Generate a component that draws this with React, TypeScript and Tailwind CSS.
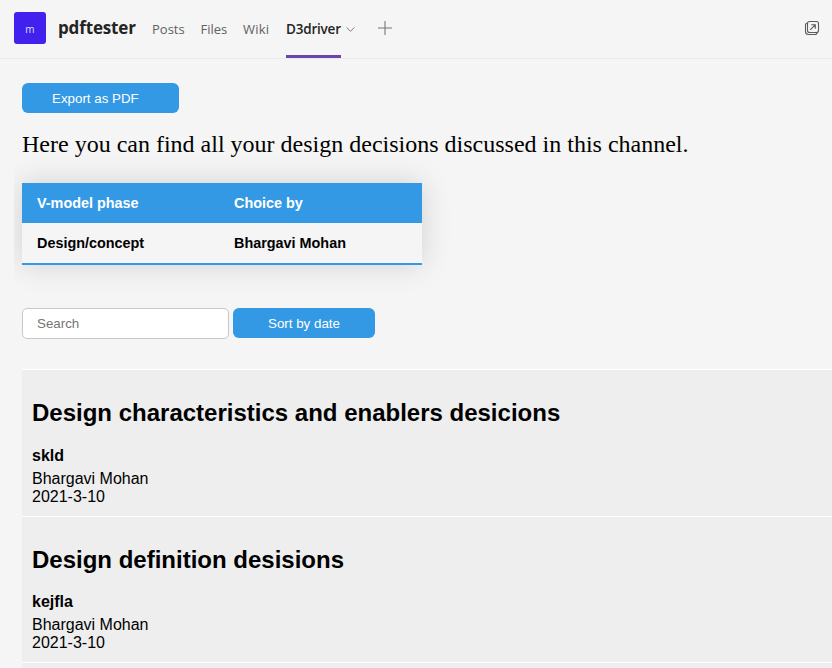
import React from "react";

type Decision = { title: string; name: string; author: string; date: string; size: string; gap: string };

const decisions: Decision[] = [
  { title: "Design characteristics and enablers desicions", name: "skld", author: "Bhargavi Mohan", date: "2021-3-10", size: "h-[147px]", gap: "mt-[20px]" },
  { title: "Design definition desisions", name: "kejfla", author: "Bhargavi Mohan", date: "2021-3-10", size: "h-[146px]", gap: "mt-[19px]" },
];

function TopBar() {
  return (
    <header className="flex h-[59px] items-start border-b border-[#e9e9e9] pl-[14px] font-['Open_Sans',sans-serif] whitespace-nowrap">
      <div className="mt-3 flex h-8 w-8 shrink-0 items-center justify-center rounded-[3px] bg-[#4220ee] pt-[2px] text-[10px] text-[#d6e2ff]">
        m
      </div>
      <h1 className="ml-3 w-[94px] pt-4 text-[17px] leading-6 font-bold tracking-[-0.15px] text-[#242424]">pdftester</h1>
      <nav className="flex pt-[19px] text-[13px] leading-5 text-[#616161]">
        <span className="w-[48.5px]">Posts</span>
        <span className="w-[42.5px]">Files</span>
        <span className="w-[43px] tracking-[0.2px]">Wiki</span>
        <span className="h-[39px] w-[55px] border-b-[3px] border-[#6b46a8] text-[13.5px] font-semibold tracking-[-0.2px] text-[#242424]">D3driver</span>
      </nav>
      <svg className="mt-[25px] ml-[5px]" width="9" height="9" viewBox="0 0 9 9" fill="none" stroke="#777" strokeWidth="1">
        <path d="M.7 2.5 4.5 6.3 8.3 2.5" />
      </svg>
      <svg className="mt-[20px] ml-[22px]" width="16" height="16" viewBox="0 0 16 16" fill="none" stroke="#777" strokeWidth="1.1">
        <path d="M8 1v14M1 8h14" />
      </svg>
      <svg className="mt-[20px] mr-3 ml-auto" width="16" height="16" viewBox="0 0 16 16" fill="none" stroke="#5c5c5c" strokeWidth="1.1">
        <rect x="3.5" y="1.5" width="11" height="11" rx="2" />
        <path d="M3.5 3Q1.5 3 1.5 5v6.5q0 3 3 3H11q2 0 2-2M6.2 9.8l5-5M7.2 4.7h4.1v4.1" />
      </svg>
    </header>
  );
}

export default function App() {
  return (
    <div className="h-[668px] w-[832px] overflow-hidden bg-[#f5f5f5] font-['Liberation_Sans',Arial,sans-serif] text-black">
      <TopBar />
      <main className="ml-[14px] h-[609px] overflow-hidden bg-[#f5f5f5] pt-6 pl-2">
        <button className="block h-[30px] w-[157px] rounded-[6px] bg-[#3399e5] pt-[2px] pl-[30px] text-left text-[13.33px] text-white">Export as PDF</button>
        <p className="mt-[17px] h-[53px] font-['Liberation_Serif',serif] text-[24px] leading-7 whitespace-nowrap">
          Here you can find all your design decisions discussed in this channel.
        </p>
        <table className="w-[400px] table-fixed border-separate border-spacing-0 text-left text-[14.4px] leading-4 font-bold shadow-[0_0_30px_rgba(0,0,0,0.15)]">
          <thead>
            <tr className="h-10 bg-[#3399e5] text-white">
              <th className="w-[197px] py-0 pl-[15px]">V-model phase</th>
              <th className="py-0 pl-[15px]">Choice by</th>
            </tr>
          </thead>
          <tbody>
            <tr className="h-[42px] bg-[#f5f5f5]">
              <td className="border-b-2 border-[#3399e5] py-0 pl-[15px]">Design/concept</td>
              <td className="border-b-2 border-[#3399e5] py-0 pl-[15px]">Bhargavi Mohan</td>
            </tr>
          </tbody>
        </table>
        <div className="mt-[43px] flex gap-1 text-[13.33px]">
          <input
            className="h-[31px] w-[207px] rounded-[5px] border border-[#c8c8c8] bg-white px-[14px] placeholder:text-[#757575]"
            placeholder="Search"
          />
          <button className="h-[30px] w-[142px] rounded-[6px] bg-[#3399e5] pt-[2px] text-white">Sort by date</button>
        </div>
        <ul className="mt-[30px]">
          {decisions.map((d) => (
            <li key={d.name} className={`${d.size} border-t border-white bg-[#eeeeee] pl-[10px]`}>
              <h2 className="pt-[29px] text-[24px] leading-7 font-bold">{d.title}</h2>
              <h3 className={`${d.gap} text-[16px] leading-[18px] font-bold`}>{d.name}</h3>
              <p className="mt-[5px] text-[16px] leading-[18px]">{d.author}</p>
              <p className="text-[16px] leading-[18px]">{d.date}</p>
            </li>
          ))}
          <li className="h-10 border-t border-white bg-[#eeeeee]" />
        </ul>
      </main>
    </div>
  );
}
